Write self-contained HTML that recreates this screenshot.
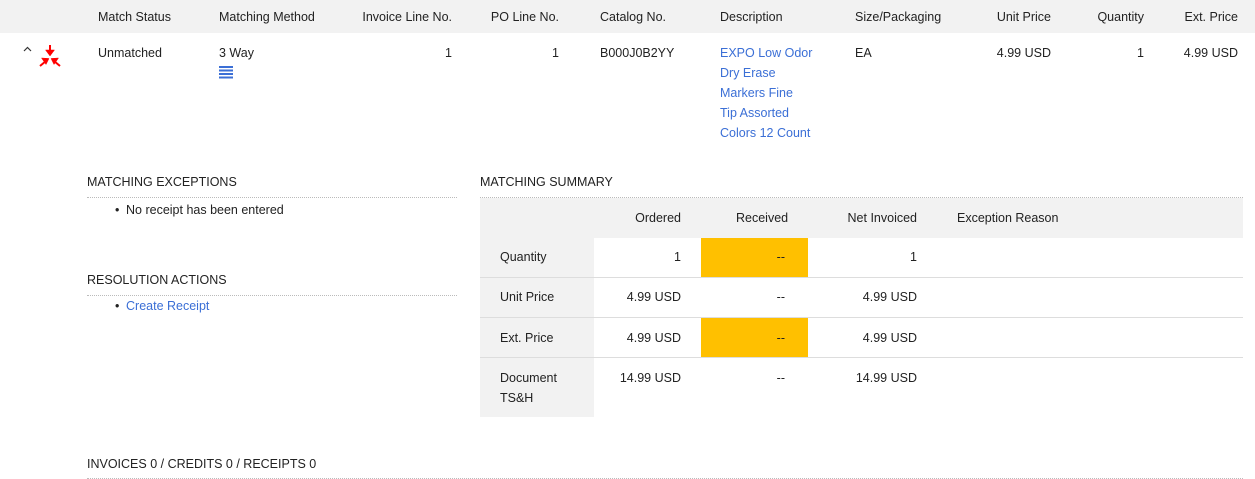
<!DOCTYPE html>
<html><head><meta charset="utf-8"><style>
body{margin:0;width:1255px;height:479px;overflow:hidden;background:#fff;font-family:"Liberation Sans",Arial,sans-serif;font-size:12.5px;color:#222;position:relative}
.a{position:absolute;white-space:nowrap;line-height:16px}
.r{text-align:right}
.lnk{color:#3b6fd6}
.hd{position:absolute;left:0;top:0;width:1255px;height:33px;background:#f2f2f2}
.dot{position:absolute;height:0;border-top:1px dotted #bbb}
.bx{position:absolute}
</style></head><body>
<div class="hd"></div>
<div class="a" style="left:98px;top:9px">Match Status</div>
<div class="a" style="left:219px;top:9px">Matching Method</div>
<div class="a r" style="right:803px;top:9px">Invoice Line No.</div>
<div class="a r" style="right:696px;top:9px">PO Line No.</div>
<div class="a" style="left:600px;top:9px">Catalog No.</div>
<div class="a" style="left:720px;top:9px">Description</div>
<div class="a" style="left:855px;top:9px">Size/Packaging</div>
<div class="a r" style="right:204px;top:9px">Unit Price</div>
<div class="a r" style="right:111px;top:9px">Quantity</div>
<div class="a r" style="right:17px;top:9px">Ext. Price</div>

<svg class="bx" style="left:22px;top:45px" width="42" height="24" viewBox="0 0 42 24">
<path d="M2 6 L5.5 2.5 L9 6" fill="none" stroke="#333" stroke-width="1.2"/>
<g fill="#f00" stroke="#f00">
<line x1="28" y1="0" x2="28" y2="8" stroke-width="2"/><path d="M23.5 5 L28 11 L32.5 5Z" stroke-width="0.5"/>
<line x1="18" y1="21" x2="24" y2="16" stroke-width="2"/><path d="M19.5 13 L27 13.5 L24 19.5Z" stroke-width="0.5"/>
<line x1="38" y1="21" x2="32" y2="16" stroke-width="2"/><path d="M36.5 13 L29 13.5 L32 19.5Z" stroke-width="0.5"/>
</g></svg>
<div class="a" style="left:98px;top:45px">Unmatched</div>
<div class="a" style="left:219px;top:45px">3 Way</div>
<svg class="bx" style="left:219px;top:66px" width="14" height="13"><g fill="#3b6fd6"><rect x="0" y="0" width="14" height="2"/><rect x="0" y="3.5" width="14" height="2"/><rect x="0" y="7" width="14" height="2"/><rect x="0" y="10.5" width="14" height="2"/></g></svg>
<div class="a r" style="right:803px;top:45px">1</div>
<div class="a r" style="right:696px;top:45px">1</div>
<div class="a" style="left:600px;top:45px">B000J0B2YY</div>
<div class="a lnk" style="left:720px;top:43px;line-height:20px">EXPO Low Odor<br>Dry Erase<br>Markers Fine<br>Tip Assorted<br>Colors 12 Count</div>
<div class="a" style="left:855px;top:45px">EA</div>
<div class="a r" style="right:204px;top:45px">4.99 USD</div>
<div class="a r" style="right:111px;top:45px">1</div>
<div class="a r" style="right:17px;top:45px">4.99 USD</div>

<div class="a" style="left:87px;top:174px">MATCHING EXCEPTIONS</div>
<div class="dot" style="left:87px;top:197px;width:370px"></div>
<div class="a" style="left:115px;top:202px">•</div>
<div class="a" style="left:126px;top:202px">No receipt has been entered</div>
<div class="a" style="left:87px;top:272px">RESOLUTION ACTIONS</div>
<div class="dot" style="left:87px;top:295px;width:370px"></div>
<div class="a" style="left:115px;top:298px">•</div>
<div class="a lnk" style="left:126px;top:298px">Create Receipt</div>

<div class="a" style="left:480px;top:174px">MATCHING SUMMARY</div>
<div class="dot" style="left:480px;top:197px;width:763px"></div>
<div class="bx" style="left:480px;top:198px;width:763px;height:40px;background:#f2f2f2"></div>
<div class="bx" style="left:480px;top:238px;width:114px;height:179px;background:#f2f2f2"></div>
<div class="bx" style="left:701px;top:238px;width:107px;height:40px;background:#ffc000"></div>
<div class="bx" style="left:701px;top:318px;width:107px;height:40px;background:#ffc000"></div>
<div class="bx" style="left:480px;top:277px;width:763px;height:1px;background:#ddd"></div>
<div class="bx" style="left:480px;top:317px;width:763px;height:1px;background:#ddd"></div>
<div class="bx" style="left:480px;top:357px;width:763px;height:1px;background:#ddd"></div>

<div class="a r" style="right:574px;top:210px">Ordered</div>
<div class="a" style="left:736px;top:210px">Received</div>
<div class="a r" style="right:338px;top:210px">Net Invoiced</div>
<div class="a" style="left:957px;top:210px">Exception Reason</div>

<div class="a" style="left:500px;top:249px">Quantity</div>
<div class="a r" style="right:574px;top:249px">1</div>
<div class="a r" style="right:470px;top:249px">--</div>
<div class="a r" style="right:338px;top:249px">1</div>

<div class="a" style="left:500px;top:289px">Unit Price</div>
<div class="a r" style="right:574px;top:289px">4.99 USD</div>
<div class="a r" style="right:470px;top:289px">--</div>
<div class="a r" style="right:338px;top:289px">4.99 USD</div>

<div class="a" style="left:500px;top:330px">Ext. Price</div>
<div class="a r" style="right:574px;top:330px">4.99 USD</div>
<div class="a r" style="right:470px;top:330px">--</div>
<div class="a r" style="right:338px;top:330px">4.99 USD</div>

<div class="a" style="left:500px;top:368px;line-height:20px">Document<br>TS&amp;H</div>
<div class="a r" style="right:574px;top:370px">14.99 USD</div>
<div class="a r" style="right:470px;top:370px">--</div>
<div class="a r" style="right:338px;top:370px">14.99 USD</div>

<div class="a" style="left:87px;top:456px">INVOICES 0 / CREDITS 0 / RECEIPTS 0</div>
<div class="dot" style="left:87px;top:478px;width:1156px"></div>
</body></html>
